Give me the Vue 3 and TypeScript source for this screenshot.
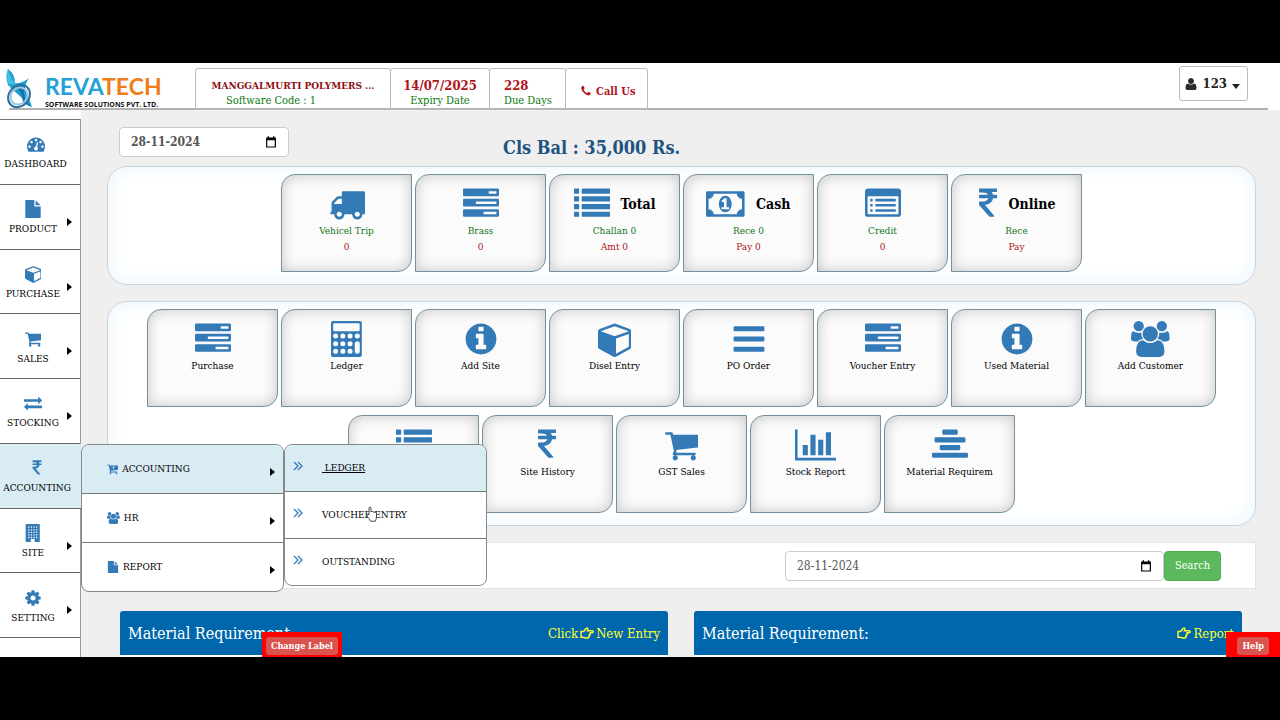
<script setup lang="ts">
import { ref } from 'vue'

interface Glyph { w: number; d: string }
interface NavItem { label: string; icon: string; arrow: boolean; active?: boolean }
interface Tile { icon: string; title?: string; lines: { text: string; tone: string }[] }

const box = (x: number, y: number, w: number, h: number, r = 24): string =>
  `M${x + r} ${y}h${w - 2 * r}a${r} ${r} 0 0 1 ${r} ${r}v${h - 2 * r}a${r} ${r} 0 0 1-${r} ${r}h-${w - 2 * r}a${r} ${r} 0 0 1-${r}-${r}v-${h - 2 * r}a${r} ${r} 0 0 1 ${r}-${r}z`
const dot = (cx: number, cy: number, r: number): string => box(cx - r, cy - r, 2 * r, 2 * r, r)

const listRows = [128, 512, 896, 1280].map((y) => box(0, y, 256, 256) + box(384, y, 1408, 256)).join('')
const altRows = [640, 896, 1152].map((y) => box(256, y, 128, 128) + box(512, y, 1024, 128)).join('')
const keys = [750, 1130, 1510]
  .map((y, r) => [230, 590, 950, 1310].filter((x) => !(x === 1310 && r > 0)).map((x) => dot(x, y, 125)).join(''))
  .join('')
const windows = [256, 512, 768, 1024, 1280]
  .map((y) => [320, 576, 832, 1088].map((x) => box(x, y, 128, 128, 10)).join(''))
  .join('')
const cart =
  'M640 1536q0 52-38 90t-90 38-90-38-38-90 38-90 90-38 90 38 38 90zm896 0q0 52-38 90t-90 38-90-38-38-90 38-90 90-38 90 38 38 90zm128-1088v512q0 24-16.5 42.5t-40.5 21.5l-1044 122q13 60 13 70 0 16-24 64h920q26 0 45 19t19 45-19 45-45 19h-1024q-26 0-45-19t-19-45q0-11 8-31.5t16-36 21.5-40 15.5-29.5l-177-823h-204q-26 0-45-19t-19-45 19-45 45-19h256q16 0 28.5 6.5t19.5 15.5 13 24.5 8 26 5.5 29.5 4.5 26h1201q26 0 45 19t19 45z'

const glyphs: Record<string, Glyph> = {
  truck: { w: 1792, d: 'M640 1408q0-52-38-90t-90-38-90 38-38 90 38 90 90 38 90-38 38-90zm-384-512h384v-256h-158q-13 0-22 9l-195 195q-9 9-9 22v30zm1280 512q0-52-38-90t-90-38-90 38-38 90 38 90 90 38 90-38 38-90zm256-1088v1024q0 15-4 26.5t-13.5 18.5-16.5 11.5-23.5 6-22.5 2-25.5 0-22.5-.5q0 106-75 181t-181 75-181-75-75-181h-384q0 106-75 181t-181 75-181-75-75-181h-64q-3 0-22.5.5t-25.5 0-22.5-2-23.5-6-16.5-11.5-13.5-18.5-4-26.5q0-26 19-45t45-19v-320q0-8-.5-35t0-38 2.5-34.5 6.5-37 14-30.5 22.5-30l198-198q19-19 50.5-32t58.5-13h160v-192q0-26 19-45t45-19h1024q26 0 45 19t19 45z' },
  tasks: { w: 1792, d: box(0, 128, 1792, 384, 64) + box(0, 640, 1792, 384, 64) + box(0, 1152, 1792, 384, 64) + 'M1280 256h384v128h-384zM640 768h1024v128h-1024zM1024 1280h640v128h-640z' },
  list: { w: 1792, d: listRows },
  money: { w: 1920, d: 'M768 1152h384v-96h-128v-448h-114l-148 137 77 80q42-37 55-57h2v288h-128v96zm512-256q0 70-21 142t-59.5 134-101.5 101-138 39-138-39-101.5-101-59.5-134-21-142 21-142 59.5-134 101.5-101 138-39 138 39 101.5 101 59.5 134 21 142zm512 256v-512q-106 0-181-75t-75-181h-1152q0 106-75 181t-181 75v512q106 0 181 75t75 181h1152q0-106 75-181t181-75zm128-832v1152q0 26-19 45t-45 19h-1792q-26 0-45-19t-19-45v-1152q0-26 19-45t45-19h1792q26 0 45 19t19 45z' },
  listAlt: { w: 1792, d: altRows + box(0, 128, 1792, 1408, 160) + box(128, 512, 1536, 896, 32) },
  rupee: { w: 1000, d: 'M950 470v102q0 14-9 23t-23 9h-168q-23 144-129 234t-276 110q167 178 459 536 14 16 4 34-8 18-29 18h-195q-16 0-25-12-306-367-498-571-9-9-9-22v-127q0-13 9.5-22.5t22.5-9.5h112q132 0 212.5-43t102.5-125h-427q-14 0-23-9t-9-23v-102q0-14 9-23t23-9h413q-57-113-268-113h-145q-13 0-22.5-9.5t-9.5-22.5v-133q0-14 9-23t23-9h832q14 0 23 9t9 23v102q0 14-9 23t-23 9h-233q47 61 64 144h171q14 0 23 9t9 23z' },
  calculator: { w: 1536, d: box(0, 0, 1536, 1792, 96) + box(110, 112, 1316, 400, 48) + keys + box(1185, 1005, 250, 630, 125) },
  info: { w: 1792, d: 'M1152 1376v-160q0-14-9-23t-23-9h-96v-512q0-14-9-23t-23-9h-320q-14 0-23 9t-9 23v160q0 14 9 23t23 9h96v320h-96q-14 0-23 9t-9 23v160q0 14 9 23t23 9h448q14 0 23-9t9-23zm-128-896v-160q0-14-9-23t-23-9h-192q-14 0-23 9t-9 23v160q0 14 9 23t23 9h192q14 0 23-9t9-23zm640 416q0 209-103 385.5t-279.5 279.5-385.5 103-385.5-103-279.5-279.5-103-385.5 103-385.5 279.5-279.5 385.5-103 385.5 103 279.5 279.5 103 385.5z' },
  cube: { w: 1664, d: 'M896 1629l640-349v-636l-640 233v752zm-64-865l698-254-698-254-698 254zm832-252v768q0 35-18 65t-49 47l-704 384q-28 16-61 16t-61-16l-704-384q-31-17-49-47t-18-65v-768q0-40 23-73t61-47l704-256q22-8 44-8t44 8l704 256q38 14 61 47t23 73z' },
  bars: { w: 1792, d: box(128, 256, 1536, 256, 64) + box(128, 768, 1536, 256, 64) + box(128, 1280, 1536, 256, 64) },
  users: { w: 1920, d: 'M593 896q-162 5-265 128h-134q-82 0-138-40.5t-56-118.5q0-353 124-353 6 0 43.5 21t97.5 42.5 119 21.5q67 0 133-23-5 37-5 66 0 139 81 256zm1071 637q0 120-73 189.5t-194 69.5h-874q-121 0-194-69.5t-73-189.5q0-53 3.5-103.5t14-109 26.5-108.5 43-97.5 62-81 85.5-53.5 111.5-20q10 0 43 21.5t73 48 107 48 135 21.5 135-21.5 107-48 73-48 43-21.5q61 0 111.5 20t85.5 53.5 62 81 43 97.5 26.5 108.5 14 109 3.5 103.5zm-1024-1277q0 106-75 181t-181 75-181-75-75-181 75-181 181-75 181 75 75 181zm704 384q0 159-112.5 271.5t-271.5 112.5-271.5-112.5-112.5-271.5 112.5-271.5 271.5-112.5 271.5 112.5 112.5 271.5zm576 225q0 78-56 118.5t-138 40.5h-134q-103-123-265-128 81-117 81-256 0-29-5-66 66 23 133 23 59 0 119-21.5t97.5-42.5 43.5-21q124 0 124 353zm-128-609q0 106-75 181t-181 75-181-75-75-181 75-181 181-75 181 75 75 181z' },
  cart: { w: 1664, d: cart },
  cartDown: { w: 1664, d: cart + 'M900 480h128v176h150l-214 214-214-214h150z' },
  chart: { w: 2048, d: 'M640 896v512h-256v-512h256zm384-512v1024h-256v-1024h256zm1024 1152v128h-2048v-1536h128v1408h1920zm-640-896v768h-256v-768h256zm384-384v1152h-256v-1152h256z' },
  align: { w: 1792, d: box(512, 128, 768, 256, 64) + box(128, 512, 1536, 256, 64) + box(384, 896, 1024, 256, 64) + box(0, 1280, 1792, 256, 64) },
  gauge: { w: 1792, d: 'M384 1152q0-53-37.5-90.5t-90.5-37.5-90.5 37.5-37.5 90.5 37.5 90.5 90.5 37.5 90.5-37.5 37.5-90.5zm192-448q0-53-37.5-90.5t-90.5-37.5-90.5 37.5-37.5 90.5 37.5 90.5 90.5 37.5 90.5-37.5 37.5-90.5zm428 481l101-382q6-26-7.5-48.5t-38.5-29.5-48 6.5-30 39.5l-101 382q-60 5-107 43.5t-63 98.5q-20 77 20 146t117 89 146-20 89-117q16-60-6-117t-72-91zm660-33q0-53-37.5-90.5t-90.5-37.5-90.5 37.5-37.5 90.5 37.5 90.5 90.5 37.5 90.5-37.5 37.5-90.5zm-640-640q0-53-37.5-90.5t-90.5-37.5-90.5 37.5-37.5 90.5 37.5 90.5 90.5 37.5 90.5-37.5 37.5-90.5zm448 192q0-53-37.5-90.5t-90.5-37.5-90.5 37.5-37.5 90.5 37.5 90.5 90.5 37.5 90.5-37.5 37.5-90.5zm320 448q0 261-141 483-19 29-54 29h-1402q-35 0-54-29-141-221-141-483 0-182 71-348t191-286 286-191 348-71 348 71 286 191 191 286 71 348z' },
  file: { w: 1792, d: 'M1152 512v-472q22 14 36 28l408 408q14 14 28 36h-472zm-128 32q0 40 28 68t68 28h544v1056q0 40-28 68t-68 28h-1344q-40 0-68-28t-28-68v-1600q0-40 28-68t68-28h800v544z' },
  exchange: { w: 1792, d: 'M1792 1184v192q0 13-9.5 22.5t-22.5 9.5h-1376v192q0 13-9.5 22.5t-22.5 9.5q-12 0-24-10l-319-320q-9-9-9-22 0-14 9-23l320-320q9-9 23-9 13 0 22.5 9.5t9.5 22.5v192h1376q13 0 22.5 9.5t9.5 22.5zm0-544q0 14-9 23l-320 320q-9 9-23 9-13 0-22.5-9.5t-9.5-22.5v-192h-1376q-13 0-22.5-9.5t-9.5-22.5v-192q0-13 9.5-22.5t22.5-9.5h1376v-192q0-14 9-23t23-9q12 0 24 10l319 319q9 9 9 23z' },
  building: { w: 1536, d: box(64, 0, 1408, 1792, 64) + windows + box(576, 1500, 384, 292, 10) },
  cog: { w: 1792, d: 'M1152 896q0-106-75-181t-181-75-181 75-75 181 75 181 181 75 181-75 75-181zm512-109v222q0 12-8 23t-20 13l-185 28q-19 54-39 91 35 50 107 138 10 12 10 25t-9 23q-27 37-99 108t-94 71q-12 0-26-9l-138-108q-44 23-91 38-16 136-29 186-7 28-36 28h-222q-14 0-24.5-8.5t-11.5-21.5l-28-184q-49-16-90-37l-141 107q-10 9-25 9-14 0-25-11-126-114-165-168-7-10-7-23 0-12 8-23 15-21 51-66.5t54-70.5q-27-50-41-99l-183-27q-13-2-21-12.5t-8-23.5v-222q0-12 8-23t19-13l186-28q14-46 39-92-40-57-107-138-10-12-10-24 0-10 9-23 26-36 98.5-107.5t94.5-71.5q13 0 26 10l138 107q44-23 91-38 16-136 29-186 7-28 36-28h222q14 0 24.5 8.5t11.5 21.5l28 184q49 16 90 37l142-107q9-9 24-9 13 0 25 10 129 119 165 170 7 8 7 22 0 12-8 23-15 21-51 66.5t-54 70.5q26 50 41 98l183 28q13 2 21 12.5t8 23.5z' },
  phone: { w: 1792, d: 'M1600 1240q0 27-10 70.5t-21 68.5q-21 50-122 106-94 51-186 51-27 0-53-3.5t-57.5-12.5-47-14.5-55.5-20.5-49-18q-98-35-175-83-127-79-264-216t-216-264q-48-77-83-175-3-9-18-49t-20.5-55.5-14.5-47-12.5-57.5-3.5-53q0-92 51-186 56-101 106-122 25-11 68.5-21t70.5-10q14 0 21 3 18 6 53 76 11 19 30 54t35 63.5 31 53.5q3 4 17.5 25t21.5 35.5 7 28.5q0 20-28.5 50t-62 55-62 53-28.5 46q0 9 5 22.5t8.5 20.5 14 24 11.5 19q76 137 174 235t235 174q2 1 19 11.5t24 14 20.5 8.5 22.5 5q18 0 46-28.5t53-62 55-62 50-28.5q14 0 28.5 7t35.5 21.5 25 17.5q25 15 53.5 31t63.5 35 54 30q70 35 76 53 3 7 3 21z' },
  user: { w: 1792, d: 'M1600 1405q0 120-73 189.5t-194 69.5h-874q-121 0-194-69.5t-73-189.5q0-53 3.5-103.5t14-109 26.5-108.5 43-97.5 62-81 85.5-53.5 111.5-20q9 0 42 21.5t74.5 48 108 48 133.5 21.5 133.5-21.5 108-48 74.5-48 42-21.5q61 0 111.5 20t85.5 53.5 62 81 43 97.5 26.5 108.5 14 109 3.5 103.5zm-320-893q0 159-112.5 271.5t-271.5 112.5-271.5-112.5-112.5-271.5 112.5-271.5 271.5-112.5 271.5 112.5 112.5 271.5z' },
  calendar: { w: 1792, d: 'M160 240h240v-200h200v200h592v-200h200v200h240v1492h-1472zM340 640v912h1112v-912z' },
}
const view = (name: string): string => `0 0 ${glyphs[name].w} 1792`

const nav: NavItem[] = [
  { label: 'DASHBOARD', icon: 'gauge', arrow: false },
  { label: 'PRODUCT', icon: 'file', arrow: true },
  { label: 'PURCHASE', icon: 'cube', arrow: true },
  { label: 'SALES', icon: 'cart', arrow: true },
  { label: 'STOCKING', icon: 'exchange', arrow: true },
  { label: 'ACCOUNTING', icon: 'rupee', arrow: false, active: true },
  { label: 'SITE', icon: 'building', arrow: true },
  { label: 'SETTING', icon: 'cog', arrow: true },
]
const menu = [
  { label: 'ACCOUNTING', icon: 'cartDown' },
  { label: 'HR', icon: 'users' },
  { label: 'REPORT', icon: 'file' },
]
const submenu = ['LEDGER', 'VOUCHER ENTRY', 'OUTSTANDING']

const pair = (a: string, b: string) => [{ text: a, tone: 'green' }, { text: b, tone: 'red' }]
const stats: Tile[] = [
  { icon: 'truck', lines: pair('Vehicel Trip', '0') },
  { icon: 'tasks', lines: pair('Brass', '0') },
  { icon: 'list', title: 'Total', lines: pair('Challan 0', 'Amt 0') },
  { icon: 'money', title: 'Cash', lines: pair('Rece 0', 'Pay 0') },
  { icon: 'listAlt', lines: pair('Credit', '0') },
  { icon: 'rupee', title: 'Online', lines: pair('Rece', 'Pay') },
]
const link = (icon: string, text?: string): Tile => ({ icon, lines: text ? [{ text, tone: 'black' }] : [] })
const links: Tile[] = [
  link('tasks', 'Purchase'),
  link('calculator', 'Ledger'),
  link('info', 'Add Site'),
  link('cube', 'Disel Entry'),
  link('bars', 'PO Order'),
  link('tasks', 'Voucher Entry'),
  link('info', 'Used Material'),
  link('users', 'Add Customer'),
  link('list'),
  link('rupee', 'Site History'),
  link('cart', 'GST Sales'),
  link('chart', 'Stock Report'),
  link('align', 'Material Requirem'),
]
const groups = [stats, links]
const balanceDate = ref('28-11-2024')
const searchDate = ref('28-11-2024')
</script>

<template>
  <div class="screen">
    <div class="stage">
      <header class="top">
        <div class="brand">
          <svg class="mark" viewBox="0 0 28 42">
            <path d="M3 1Q10 6 10 15Q17 16 24 10Q20 16 20 22Q25 32 27 39Q20 37 17 30Q10 24 3 17Q0 9 3 1Z" fill="#1f9fce" />
            <path d="M3 1Q5 10 11 16Q6 18 3 15Q0 9 3 1Z" fill="#43bfe3" />
            <path d="M10 18Q17 23 18 34Q23 38 27 39Q16 30 20 19Q15 17 10 18Z" fill="#1473ad" />
            <ellipse cx="14" cy="28" rx="12" ry="10" transform="rotate(-48 14 28)" fill="none" stroke="#2a6f9f" stroke-width="2" />
            <ellipse cx="14" cy="28" rx="9" ry="8" transform="rotate(-48 14 28)" fill="none" stroke="#9cc7dd" stroke-width="2" />
          </svg>
          <div>
            <div class="name"><span>REVA</span><span class="orange">TECH</span></div>
            <div class="sub">SOFTWARE SOLUTIONS PVT. LTD.</div>
          </div>
        </div>
        <div class="facts">
          <div class="fact firm"><b class="maroon">MANGGALMURTI POLYMERS ...</b><span>Software Code : 1</span></div>
          <div class="fact expiry"><b>14/07/2025</b><span>Expiry Date</span></div>
          <div class="fact days"><b>228</b><span>Due Days</span></div>
          <a href="#call" class="fact call">
            <svg class="i12" :viewBox="view('phone')"><path :d="glyphs.phone.d" /></svg><b>Call Us</b>
          </a>
        </div>
        <button class="account" type="button">
          <svg class="i14" :viewBox="view('user')"><path :d="glyphs.user.d" /></svg>
          <b>123</b><i class="caret"></i>
        </button>
      </header>

      <div class="body">
        <nav class="side">
          <ul class="nav">
            <li v-for="n in nav" :key="n.label" :class="{ active: n.active, parent: n.arrow }">
              <a href="#nav">
                <svg class="i18" :viewBox="view(n.icon)"><path :d="glyphs[n.icon].d" fill-rule="evenodd" /></svg>
                <span>{{ n.label }}</span>
              </a>
              <i v-if="n.arrow" class="arrow"></i>
              <ul v-if="n.active" class="flyout">
                <li v-for="(m, k) in menu" :key="m.label">
                  <a href="#menu" :class="{ lit: k === 0 }">
                    <svg class="i12" :viewBox="view(m.icon)"><path :d="glyphs[m.icon].d" fill-rule="evenodd" /></svg>
                    <span>{{ m.label }}</span>
                    <i class="arrow"></i>
                  </a>
                  <ul v-if="k === 0" class="flyout second">
                    <li v-for="(s, j) in submenu" :key="s">
                      <a href="#page" :class="{ lit: j === 0 }">
                        <svg class="chev" viewBox="0 0 10 10"><path d="M1 1l4 4-4 4M5 1l4 4-4 4" fill="none" stroke="#337ab7" stroke-width="1.3" /></svg>
                        <span><template v-if="j === 0">&nbsp;</template>{{ s }}</span>
                      </a>
                    </li>
                  </ul>
                </li>
              </ul>
            </li>
          </ul>
        </nav>

        <main class="main">
          <div class="headline">
            <div class="date small">
              <input v-model="balanceDate" type="text" aria-label="Balance date" />
              <svg :viewBox="view('calendar')"><path :d="glyphs.calendar.d" fill-rule="evenodd" /></svg>
            </div>
            <h1>Cls Bal : 35,000 Rs.</h1>
          </div>

          <section v-for="(g, i) in groups" :key="i" class="panel">
            <a v-for="(t, k) in g" :key="k" href="#tile" class="tile">
              <span class="pic">
                <svg class="i36" :viewBox="view(t.icon)"><path :d="glyphs[t.icon].d" fill-rule="evenodd" /></svg>
                <b v-if="t.title">{{ t.title }}</b>
              </span>
              <span v-for="l in t.lines" :key="l.text" class="line" :class="l.tone">{{ l.text }}</span>
            </a>
          </section>

          <form class="search" @submit.prevent>
            <div class="date">
              <input v-model="searchDate" type="text" aria-label="Search date" />
              <svg :viewBox="view('calendar')"><path :d="glyphs.calendar.d" fill-rule="evenodd" /></svg>
            </div>
            <button type="submit">Search</button>
          </form>

          <div class="boards">
            <section class="board">
              <h2>Material Requirement:</h2>
              <a href="#new">Click
                <svg class="hand" viewBox="0 0 14 12"><path d="M1 4.5h2.2c1.500 0 2.300-3.500 3.800-3.500 1.300 0 .9 1.700.4 2.700h4.800c1.300 0 1.300 2 0 2H9.500c1 .3.900 1.700 0 1.900.6.600.3 1.500-.6 1.600.4.900-.1 1.800-1.200 1.800H5.500C4.500 11 4 10.200 3 10.200H1z" /></svg>
                New Entry</a>
            </section>
            <section class="board">
              <h2>Material Requirement:</h2>
              <a href="#report">
                <svg class="hand" viewBox="0 0 14 12"><path d="M1 4.5h2.2c1.500 0 2.300-3.500 3.800-3.500 1.300 0 .9 1.700.4 2.700h4.800c1.300 0 1.300 2 0 2H9.500c1 .3.900 1.700 0 1.900.6.600.3 1.500-.6 1.600.4.900-.1 1.800-1.200 1.800H5.500C4.500 11 4 10.200 3 10.200H1z" /></svg>
                Report</a>
            </section>
          </div>
        </main>
      </div>

      <div class="float label"><button type="button">Change Label</button></div>
      <div class="float help"><button type="button">Help</button></div>
      <svg class="pointer" viewBox="0 0 12 16">
        <path d="M3 9V2c0-1.300 2-1.300 2 0v4c.3-1 1.800-.8 2 .3.400-.8 1.700-.6 1.900.4.600-.5 1.600-.2 1.600.8v3.500c0 2-1 2.600-1 4.200H4.500C4 13.500 2 12 1 9.500.6 8.300 2 7.700 3 9z" fill="#fff" stroke="#222" stroke-width=".8" />
      </svg>
    </div>
  </div>
</template>

<style>
body { margin: 0; background: #000; }
</style>

<style scoped>
* { box-sizing: border-box; }
.screen {
  height: 100vh; padding: 63px 0; background: #000;
  font-family: "DejaVu Serif Condensed", "DejaVu Serif", serif;
  font-size: 10px; color: #000;
}
.stage { position: relative; height: 100%; overflow: hidden; background: #fff; display: flex; flex-direction: column; }
a { color: inherit; text-decoration: none; }
ul { list-style: none; margin: 0; padding: 0; }
svg { display: block; fill: #337ab7; flex: none; }
.i12 { height: 12px; }
.i14 { height: 14px; }
.i18 { height: 18px; }
.i36 { height: 36px; }

.top { display: flex; align-items: flex-start; margin: 0 12px 0 9px; height: 47px; border-bottom: 2px solid #b0b0b0; flex: none; }
.brand { display: flex; width: 186px; padding-top: 5px; margin-left: -4px; margin-right: 4px; gap: 12px; }
.mark { width: 28px; height: 42px; }
.name { font: bold 23px/28px Lato, sans-serif; color: #25a0d8; padding-top: 4px; }
.orange { color: #ef7d1a; }
.sub { font: bold 7px/10px "Open Sans", sans-serif; white-space: nowrap; color: #111; }
.facts { display: flex; padding-top: 5px; }
.fact {
  height: 42px; border: 1px solid #bbb; border-radius: 3px 3px 0 0; margin-right: -1px;
  padding-top: 9px; display: flex; flex-direction: column; align-items: center;
  font-size: 11px; line-height: 15px; color: #0a7a0a; white-space: nowrap;
}
.fact b { color: #b01217; }
.fact b.maroon { color: #8b0f14; font-size: 10px; }
.firm { width: 196px; }
.firm span { margin-right: 44px; }
.expiry { width: 100px; }
.expiry b, .days b { font-size: 13px; }
.days { width: 77px; align-items: flex-start; padding-left: 14px; }
.call { width: 83px; flex-direction: row; padding: 4px 0 0 14px; gap: 4px; }
.call svg { fill: #b01217; }
.account {
  margin: 3px 20px 0 auto; height: 35px; padding: 0 7px 0 4px; border: 1px solid #bbb; border-radius: 3px; background: #fff;
  display: flex; align-items: center; gap: 5px; font: bold 13px "DejaVu Serif Condensed", "DejaVu Serif", serif; color: #222;
}
.account svg { fill: #2b2b2b; }
.caret { border: 4px solid transparent; border-top: 5px solid #222; border-bottom: 0; margin-top: 5px; }

.body { display: flex; flex: 1; min-height: 0; }
.side { width: 81px; flex: none; padding-top: 9px; background: #fff; position: relative; z-index: 2; }
.nav { display: grid; grid-auto-rows: 1fr; min-height: 519px; border-top: 1px solid #777; }
.side::after { content: ""; position: absolute; right: 0; top: 9px; bottom: 0; border-right: 1px solid #999; }
.nav > li { position: relative; border-bottom: 1px solid #666; }
.nav > li > a { height: 100%; display: flex; flex-direction: column; align-items: center; justify-content: center; gap: 3px; padding: 3px 10px 0 0; line-height: 15px; }
.nav > li.parent > a { padding-right: 15px; }
.nav > li.active > a { padding-right: 7px; }
.nav > li.active { background: #d9ebf3; z-index: 1; }
.arrow { position: absolute; right: 9px; top: 33px; border: 4px solid transparent; border-left: 5px solid #000; border-right: 0; }
.flyout { position: absolute; left: 81px; top: 0; width: 203px; background: #fff; border: 1px solid #888; border-radius: 8px; z-index: 3; }
.flyout li { position: relative; }
.flyout li + li { border-top: 1px solid #777; }
.flyout a { position: relative; height: 48px; display: flex; align-items: center; padding-left: 25px; gap: 4px; }
.flyout .arrow { top: 23px; right: 8px; }
.lit { background: #d9ebf3; border-radius: 7px 7px 0 0; }
.second { left: 202px; top: -1px; }
.flyout .second a { height: 46px; padding-left: 8px; gap: 19px; }
.second .lit { text-decoration: underline; }
.chev { width: 10px; height: 10px; margin-bottom: 4px; }

.main { flex: 1; min-width: 0; background: #efefef; padding: 17px 24px 0 26px; }
.headline { display: flex; align-items: flex-start; margin: 0 0 5px 12px; gap: 214px; }
h1 { margin: 8px 0 0; font-size: 18px; line-height: 26px; color: #1d5380; }
.date { display: flex; align-items: center; height: 30px; background: #fff; border: 1px solid #ccc; border-radius: 4px; flex: 1; }
.date.small { flex: none; width: 170px; }
.date input { flex: 1; min-width: 0; border: 0; outline: 0; background: none; padding: 0 0 0 11px; color: #555; font: 12px "DejaVu Serif Condensed", "DejaVu Serif", serif; }
.date.small input { font-weight: bold; }
.date svg { height: 12px; margin-right: 11px; fill: #000; }
.panel {
  display: flex; flex-wrap: wrap; justify-content: center; gap: 8px 3px; padding: 7px 30px 12px; margin-bottom: 16px;
  background: #fff; border: 1px solid #c9d5dd; border-radius: 20px; box-shadow: inset 0 0 20px #e8f4fd;
}
.tile {
  width: 131px; height: 98px; padding-top: 11px; display: flex; flex-direction: column; align-items: center;
  border: 1px solid #7290a0; border-radius: 14px 0 14px 0; background: #fbfbfb; box-shadow: inset 0 0 14px #c4c4c4;
}
.pic { display: flex; align-items: center; gap: 11px; height: 36px; margin-bottom: 1px; font-size: 14px; }
.line { line-height: 16px; white-space: nowrap; }
.green { color: #11751a; }
.red { color: #b01217; }
.search { display: flex; align-items: center; height: 47px; padding: 0 34px 0 677px; background: #fff; border: 1px solid #e3e3e3; }
.search button { height: 30px; width: 57px; padding: 0; border: 1px solid #4cae4c; border-radius: 4px; background: #5cb85c; color: #fff; font: 11px "DejaVu Serif Condensed", "DejaVu Serif", serif; }
.boards { display: grid; grid-template-columns: 1fr 1fr; gap: 26px; margin: 22px 14px 0 13px; }
.board { display: flex; align-items: center; justify-content: space-between; height: 44px; padding: 0 8px; border-radius: 3px 3px 0 0; background: #0067ac; box-shadow: 0 3px #fff; }
h2 { margin: 0; font-size: 16px; font-weight: normal; color: #fff; }
.board a { display: flex; align-items: center; gap: 2px; color: #ff3; font-size: 13px; }
.hand { width: 14px; height: 12px; fill: none; stroke: #ff3; stroke-width: 1.4; }
.float { position: absolute; bottom: 0; height: 25px; padding: 5px 4px 2px; background: #f00; z-index: 4; }
.float button { display: block; height: 18px; padding: 0 5px; border: 0; border-radius: 3px; background: #d9534f; color: #fff; font: bold 9px "DejaVu Serif Condensed", "DejaVu Serif", serif; white-space: nowrap; }
.label { left: 262px; }
.help { right: 0; padding-left: 11px; padding-right: 11px; }
.pointer { position: absolute; left: 366px; top: 443px; width: 12px; height: 16px; z-index: 5; }
</style>
